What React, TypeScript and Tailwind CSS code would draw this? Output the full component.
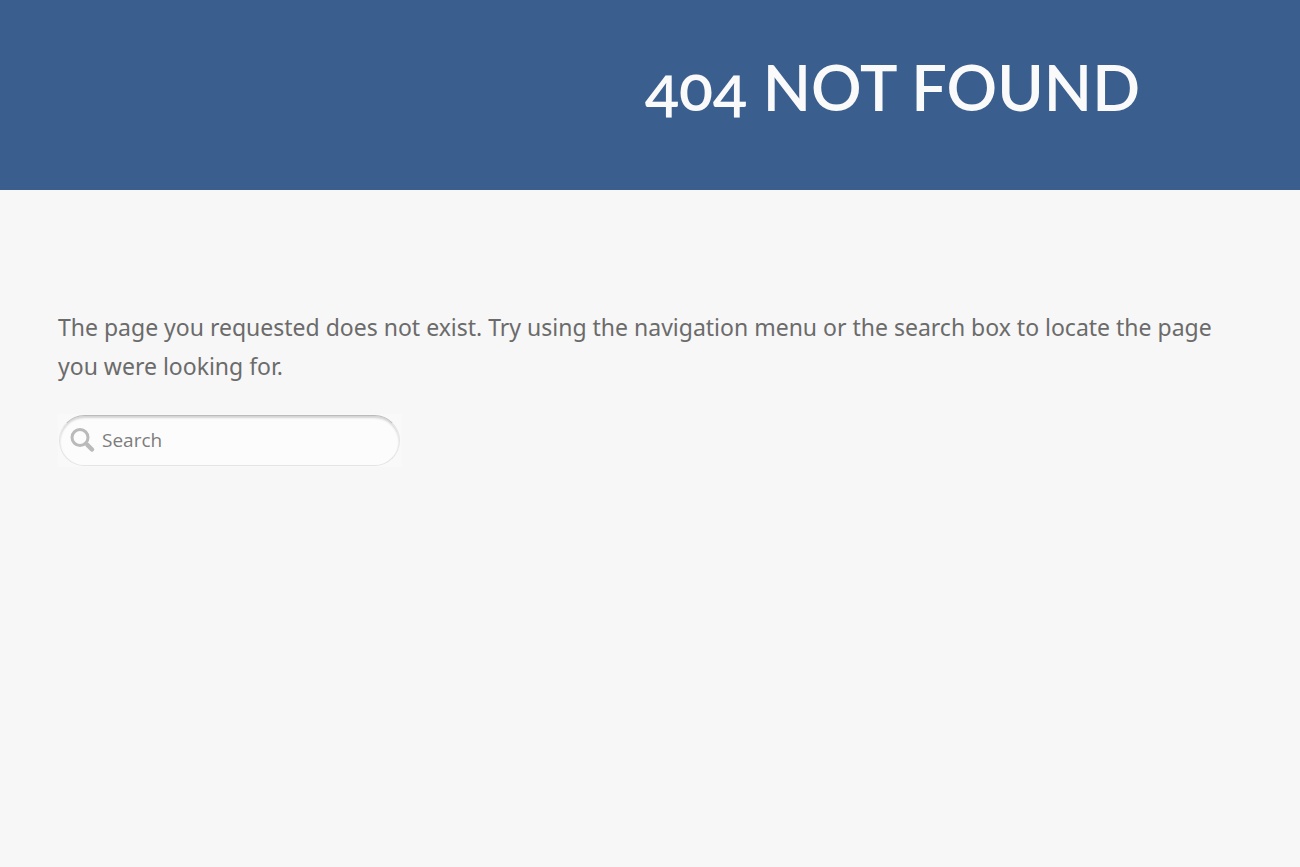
function SearchIcon() {
  return (
    <svg viewBox="0 0 26 26" className="size-6.5" fill="none" stroke="#bababa" aria-hidden="true">
      <circle cx="10" cy="9.5" r="8" strokeWidth="3" />
      <path d="M15.5 15l2 2" strokeWidth="3" />
      <path d="M17.5 17l4.5 4.5" strokeWidth="4.5" strokeLinecap="round" />
    </svg>
  );
}

function PageTitle() {
  return (
    <header className="flex h-[190px] items-start bg-[#3a5e8e] pt-[47px]">
      <div className="w-[49%] shrink-0" />
      <h1 className="pl-2 font-['Lato',sans-serif] text-[63px] leading-20 font-semibold whitespace-nowrap text-[#fafafa] uppercase oldstyle-nums">
        404 Not Found
      </h1>
    </header>
  );
}

function SearchForm() {
  return (
    <form role="search" onSubmit={(e) => e.preventDefault()} className="mt-7 w-[344px] bg-[#f9f9f9] py-px pr-0.5 pl-px">
      <div className="flex h-[51px] items-center gap-1.5 rounded-full border border-[#e4e4e4] border-t-[#bbb] bg-[#fcfcfc] pr-5 pl-2.5 shadow-[inset_0_2px_2px_#d4d4d4]">
        <label htmlFor="search" aria-label="Search" className="shrink-0">
          <SearchIcon />
        </label>
        <input
          id="search"
          type="search"
          placeholder="Search"
          className="w-full min-w-0 bg-transparent pb-px text-[19px] text-[#666] outline-none placeholder:text-[#7c7c7c]"
        />
      </div>
    </form>
  );
}

export default function App() {
  return (
    <div className="min-h-screen bg-[#f7f7f7] font-['Open_Sans',sans-serif]">
      <PageTitle />
      <main className="px-[58px] pt-[118px]">
        <p className="font-['Noto_Sans',sans-serif] text-[23px] leading-[39px] text-[#6b6b6b]">
          The page you requested does not exist. Try using the navigation menu or the search box to locate the page
          you were looking for.
        </p>
        <SearchForm />
      </main>
    </div>
  );
}
